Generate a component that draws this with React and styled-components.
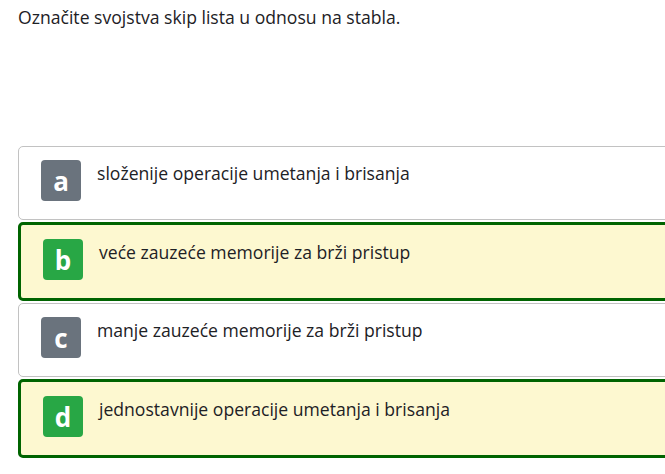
import React from "react";
import styled, { createGlobalStyle } from "styled-components";

const GlobalStyle = createGlobalStyle`
  body {
    margin: 0;
    background: #fff;
    font-family: "Open Sans", "Noto Sans", sans-serif;
    color: #1d2125;
    overflow: hidden;
  }
`;

const answers = [
  { letter: "a", text: "složenije operacije umetanja i brisanja", correct: false },
  { letter: "b", text: "veće zauzeće memorije za brži pristup", correct: true },
  { letter: "c", text: "manje zauzeće memorije za brži pristup", correct: false },
  { letter: "d", text: "jednostavnije operacije umetanja i brisanja", correct: true },
];

function App() {
  return (
    <>
      <GlobalStyle />
      <Page>
        <Question>Označite svojstva skip lista u odnosu na stabla.</Question>
        <Answers>
          {answers.map((a) => (
            <Answer key={a.letter} $correct={a.correct}>
              <Badge $correct={a.correct}>{a.letter}</Badge>
              <Label>{a.text}</Label>
            </Answer>
          ))}
        </Answers>
      </Page>
    </>
  );
}

export default App;

const Page = styled.div`
  width: 720px;
  padding: 4px 0 0 18px;
`;

const Question = styled.div`
  font-size: 17.6px;
  line-height: 26px;
`;

const Answers = styled.div`
  margin-top: 116px;
  display: flex;
  flex-direction: column;
  gap: 2px;
`;

const Answer = styled.div`
  display: flex;
  align-items: flex-start;
  gap: 16px;
  border-radius: 5px;
  border: ${(p) => (p.$correct ? "3px solid #006400" : "1px solid #c2c2c2")};
  background: ${(p) => (p.$correct ? "#fdf8d0" : "#fff")};
  padding: ${(p) => (p.$correct ? "14px 22px 18px 22px" : "13px 22px 18px 22px")};
  min-height: 41px;
`;

const Badge = styled.div`
  flex: none;
  width: 40px;
  height: 41px;
  border-radius: 4px;
  background: ${(p) => (p.$correct ? "#28a745" : "#6a737d")};
  color: #fff;
  font-size: 26px;
  font-weight: 700;
  display: flex;
  align-items: center;
  justify-content: center;
  line-height: 1;
`;

const Label = styled.div`
  font-size: 17.6px;
  line-height: 26px;
`;
